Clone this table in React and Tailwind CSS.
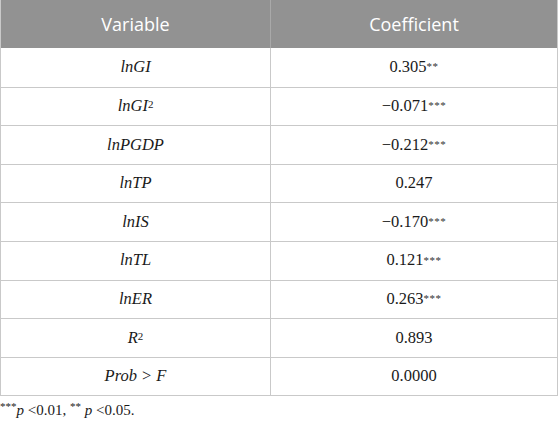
import React from "react";

const rows = [
  { v: <>lnGI</>, c: "0.305", s: "**" },
  { v: <>lnGI<sup className="text-[11px] not-italic relative -top-[2px]">2</sup></>, c: "\u22120.071", s: "***" },
  { v: <>lnPGDP</>, c: "\u22120.212", s: "***" },
  { v: <>lnTP</>, c: "0.247", s: "" },
  { v: <>lnIS</>, c: "\u22120.170", s: "***" },
  { v: <>lnTL</>, c: "0.121", s: "***" },
  { v: <>lnER</>, c: "0.263", s: "***" },
  { v: <>R<sup className="text-[11px] not-italic relative -top-[2px]">2</sup></>, c: "0.893", s: "" },
  { v: <>Prob &gt; F</>, c: "0.0000", s: "" },
];

export default function App() {
  return (
    <div className="w-[558px] h-[421px] bg-white overflow-hidden">
      <div className="border-x border-b border-[#c9c9c9]">
        <div className="grid grid-cols-[270px_1fr] h-[48px] bg-[#929292] text-white text-[18px]" style={{ fontFamily: '"Open Sans", sans-serif' }}>
          <div className="flex items-center justify-center border-r border-[#a9a9a9]">Variable</div>
          <div className="flex items-center justify-center">Coefficient</div>
        </div>
        {rows.map((r, i) => (
          <div
            key={i}
            className={`grid grid-cols-[270px_1fr] h-[38.6px] text-[16.5px] text-[#1a1a1a] ${i > 0 ? "border-t border-[#c9c9c9]" : ""}`}
            style={{ fontFamily: '"Liberation Serif", serif' }}
          >
            <div className="flex items-center justify-center italic border-r border-[#c9c9c9]">{r.v}</div>
            <div className="flex items-center justify-center">
              {r.c}
              {r.s && <sup className="text-[11px] relative -top-[1px] tracking-[0.5px] text-[#333]">{r.s}</sup>}
            </div>
          </div>
        ))}
      </div>
      <div className="pt-[3px] text-[15px] text-[#1a1a1a]" style={{ fontFamily: '"Liberation Serif", serif' }}>
        <sup className="text-[11px]">***</sup><span className="italic">p</span> &lt;0.01, <sup className="text-[11px]">**</sup> <span className="italic">p</span> &lt;0.05.
      </div>
    </div>
  );
}
